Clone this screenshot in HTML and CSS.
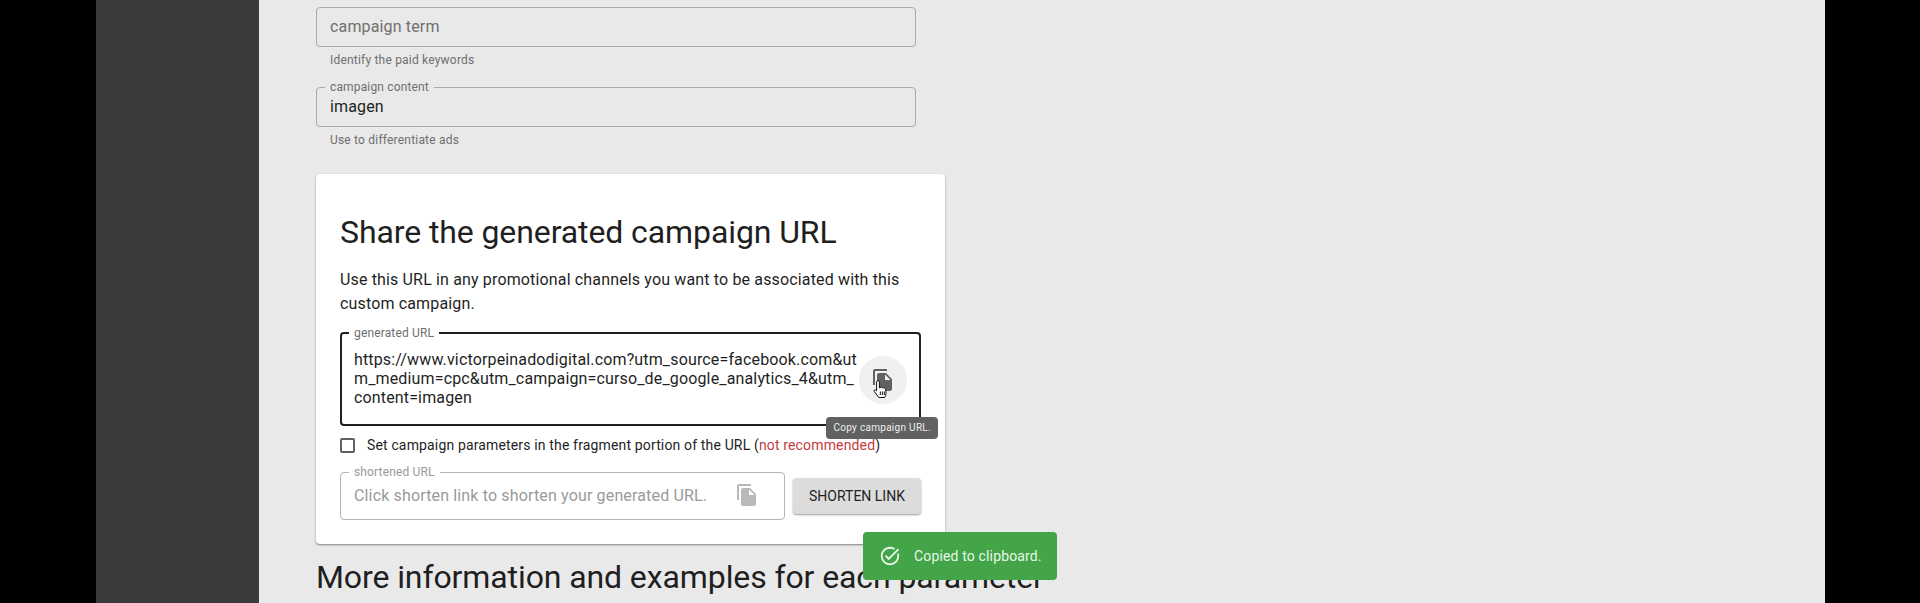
FILE: index.html
```html
<!DOCTYPE html>
<html lang="en">
<head>
  <meta charset="UTF-8">
  <title>Campaign URL Builder</title>
  <link rel="stylesheet" href="styles.css">
</head>
<body>
  <div class="layout">
    <aside class="sidebar"></aside>
    <main class="content">
      <div class="field">
        <div class="field-box placeholder">campaign term</div>
        <p class="hint">Identify the paid keywords</p>
      </div>
      <div class="field field-filled">
        <fieldset class="field-set">
          <legend>campaign content</legend>
          <div class="field-value">imagen</div>
        </fieldset>
        <p class="hint">Use to differentiate ads</p>
      </div>

      <section class="card">
        <h2>Share the generated campaign URL</h2>
        <p class="intro">Use this URL in any promotional channels you want to be associated with this custom campaign.</p>

        <fieldset class="url-set">
          <legend>generated URL</legend>
          <div class="url-text">https://www.victorpeinadodigital.com?utm_source=facebook.com&amp;ut<br>m_medium=cpc&amp;utm_campaign=curso_de_google_analytics_4&amp;utm_<br>content=imagen</div>
          <div class="copy-button">
            <svg class="copy-icon" viewBox="0 0 24 24"><path d="M16 1H4c-1.1 0-2 .9-2 2v14h2V3h12V1zm-1 4l6 6v10c0 1.1-.9 2-2 2H7.99C6.89 23 6 22.1 6 21l.01-14c0-1.1.89-2 1.99-2h7zm-1 7h5.5L14 6.5V12z"/></svg>
            <svg class="pointer" viewBox="0 0 18 20"><path d="M6 1.5c.8 0 1.4.6 1.4 1.4v6l.9-.2c.5-.6 1.5-.5 1.9.1.6-.4 1.5-.2 1.8.4.7-.3 1.6.1 1.7 1l.3 4c0 1.800-.6 3-1.400 4.300H6.800L2.200 12.400c-.6-.9.5-2.100 1.600-1.300l.8.700V2.900c0-.8.6-1.400 1.400-1.400z"/><path class="pointer-lines" d="M8.300 12.500v3.500M10.300 12.500v3.500M12.300 12.500v3.500"/></svg>
          </div>
          <div class="tooltip">Copy campaign URL.</div>
        </fieldset>

        <label class="check-row">
          <span class="checkbox"></span>
          <span>Set campaign parameters in the fragment portion of the URL (<span class="warn">not recommended</span>)</span>
        </label>

        <div class="shorten-row">
          <fieldset class="short-set">
            <legend>shortened URL</legend>
            <span class="short-text">Click shorten link to shorten your generated URL.</span>
            <svg class="copy-icon copy-muted" viewBox="0 0 24 24"><path d="M16 1H4c-1.1 0-2 .9-2 2v14h2V3h12V1zm-1 4l6 6v10c0 1.1-.9 2-2 2H7.99C6.89 23 6 22.1 6 21l.01-14c0-1.1.89-2 1.99-2h7zm-1 7h5.500L14 6.500V12z"/></svg>
          </fieldset>
          <button class="shorten-button">Shorten link</button>
        </div>
      </section>

      <h2 class="more">More information and examples for each parameter</h2>
    </main>
  </div>

  <div class="toast">
    <svg class="toast-icon" viewBox="0 0 24 24"><path d="M22 5.180L10.590 16.600l-4.240-4.250 1.410-1.410 2.830 2.830 10-10L22 5.180zm-2.210 5.040c.13.570.21 1.170.21 1.780 0 4.420-3.580 8-8 8s-8-3.580-8-8 3.580-8 8-8c1.580 0 3.040.46 4.280 1.250l1.440-1.440C16.100 2.670 14.130 2 12 2 6.480 2 2 6.480 2 12s4.480 10 10 10 10-4.480 10-10c0-1.190-.22-2.330-.6-3.390l-1.610 1.610z"/></svg>
    <span class="toast-text">Copied to clipboard.</span>
  </div>
</body>
</html>
```

FILE: styles.css
```css
* {
  box-sizing: border-box;
}
html, body {
  height: 100%;
}
body {
  margin: 0;
  background: #000;
  font-family: Roboto, 'Liberation Sans', sans-serif;
  color: #1f1f1f;
  overflow: hidden;
}
.layout {
  display: flex;
  height: 603px;
  margin: 0 95px 0 96px;
}
.sidebar {
  width: 163px;
  background: #3a3a3a;
}
.content {
  flex: 1;
  background: #e9e9e9;
  padding: 7px 0 0 57px;
  overflow: hidden;
}
.field {
  width: 600px;
}
.field-box {
  height: 40px;
  border: 1px solid #a9a9a9;
  border-radius: 4px;
  padding: 0 13px;
  line-height: 37px;
  font-size: 16px;
  letter-spacing: 0.15px;
}
.placeholder {
  color: #6f6f6f;
}
.hint {
  margin: 6px 0 0;
  padding-left: 14px;
  font-size: 12px;
  line-height: 14px;
  letter-spacing: 0.2px;
  color: #6f6f6f;
}
.field-filled {
  margin-top: 13px;
}
fieldset {
  margin: 0;
  min-width: 0;
}
legend {
  font-size: 12px;
  line-height: 14px;
  letter-spacing: 0.15px;
  padding: 0 5px;
  margin-left: -5px;
  color: #6f6f6f;
}
.field-set {
  height: 47px;
  border: 1px solid #a9a9a9;
  border-radius: 4px;
  padding: 1px 13px 0;
}
.field-value {
  font-size: 16px;
  line-height: 24px;
  letter-spacing: 0.15px;
}
.card {
  position: relative;
  width: 629px;
  height: 370px;
  margin-top: 27px;
  padding: 38px 24px 0;
  background: #fff;
  border-radius: 4px;
  box-shadow: 0 1px 2px rgba(0, 0, 0, 0.45);
}
.card h2, .more {
  margin: 0;
  font-size: 32px;
  font-weight: 400;
  line-height: 40px;
  letter-spacing: -0.1px;
}
.intro {
  margin: 16px 0 0;
  font-size: 16px;
  line-height: 24px;
  letter-spacing: 0.15px;
}
.url-set {
  position: relative;
  height: 100px;
  margin-top: 10px;
  border: 2px solid #1f1f1f;
  border-radius: 4px;
  padding: 0 12px;
}
.url-text {
  margin-top: 10px;
  font-size: 16px;
  line-height: 19px;
  letter-spacing: 0.15px;
  white-space: nowrap;
}
.copy-button {
  position: absolute;
  right: 12px;
  top: 16px;
  width: 48px;
  height: 48px;
  border-radius: 50%;
  background: #f0f0f0;
  display: flex;
  align-items: center;
  justify-content: center;
}
.copy-icon {
  width: 24px;
  height: 24px;
  fill: #616161;
}
.pointer {
  position: absolute;
  left: 13px;
  top: 23px;
  width: 18px;
  height: 20px;
  fill: #fff;
  stroke: #111;
  stroke-width: 1;
}
.pointer-lines {
  fill: none;
}
.tooltip {
  position: absolute;
  right: -19px;
  top: 77px;
  padding: 0 7px;
  height: 22px;
  line-height: 22px;
  font-size: 10px;
  letter-spacing: 0.3px;
  color: #eee;
  background: #616161;
  border-radius: 4px;
  white-space: nowrap;
}
.check-row {
  display: flex;
  align-items: center;
  gap: 12px;
  margin-top: 9px;
  font-size: 14px;
  line-height: 20px;
  letter-spacing: 0.15px;
}
.checkbox {
  width: 15px;
  height: 15px;
  border: 2px solid #616161;
  border-radius: 2px;
}
.warn {
  color: #c43c3c;
}
.shorten-row {
  display: flex;
  align-items: center;
  gap: 8px;
  margin-top: 10px;
}
.short-set {
  flex: none;
  width: 445px;
  height: 55px;
  border: 1px solid #b5b5b5;
  border-radius: 4px;
  padding: 0 13px;
  display: flex;
  align-items: center;
  justify-content: space-between;
}
.short-set legend {
  color: #9a9a9a;
}
.short-text {
  margin-top: -8px;
  font-size: 16px;
  letter-spacing: 0.15px;
  color: #9a9a9a;
}
.copy-muted {
  margin-top: -8px;
  margin-right: 12px;
  fill: #b9b9b9;
}
.shorten-button {
  width: 128px;
  height: 36px;
  margin-top: 7px;
  border: none;
  border-radius: 4px;
  background: #dcdcdc;
  box-shadow: 0 1px 2px rgba(0, 0, 0, 0.4);
  font-family: inherit;
  font-size: 14px;
  font-weight: 400;
  letter-spacing: 0;
  text-transform: uppercase;
  color: #1f1f1f;
}
.more {
  margin-top: 13px;
  white-space: nowrap;
}
.toast {
  position: absolute;
  left: 863px;
  top: 532px;
  width: 194px;
  height: 48px;
  padding: 0 16px;
  display: flex;
  align-items: center;
  gap: 13px;
  background: #43a547;
  border-radius: 4px;
  color: #e8f5e9;
  font-size: 14px;
  letter-spacing: 0.15px;
}
.toast-icon {
  flex: none;
  width: 22px;
  height: 22px;
  fill: #e8f5e9;
}
.toast-text {
  white-space: nowrap;
}
```
